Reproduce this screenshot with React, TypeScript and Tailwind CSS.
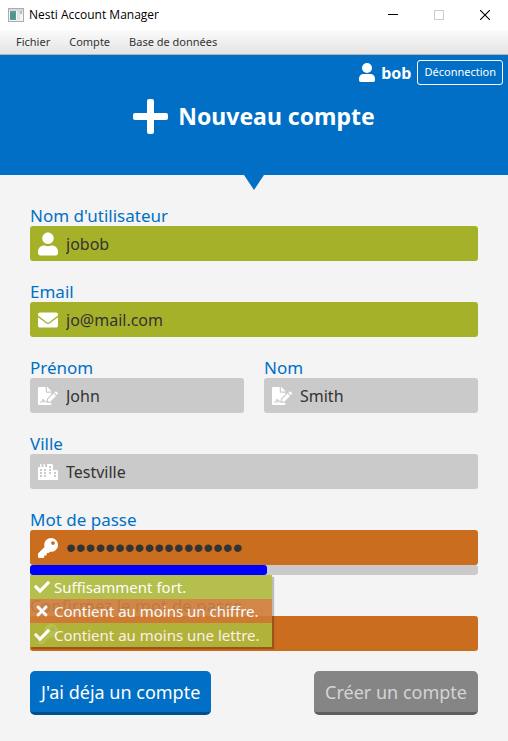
import { useId, useState, type ReactNode } from "react";
import type { IconType } from "react-icons";
import {
  FaCheck,
  FaCity,
  FaEnvelope,
  FaFileSignature,
  FaKey,
  FaTimes,
  FaUser,
} from "react-icons/fa";

type Tone = "valid" | "neutral" | "invalid";

const toneClass: Record<Tone, string> = {
  valid: "bg-[#a6b12a]",
  neutral: "bg-[#cacaca]",
  invalid: "bg-[#cb6d1e]",
};

interface FieldProps {
  label: string;
  icon: IconType;
  value: string;
  tone: Tone;
  type?: "text" | "password";
  children?: ReactNode;
}

function Field({ label, icon: Icon, value, tone, type = "text", children }: FieldProps) {
  const id = useId();
  const [text, setText] = useState(value);
  // Masked text is set larger so that its dots are easy to count.
  const font = type === "password" ? "font-['Liberation_Sans',sans-serif] text-[28px]" : "text-base";
  return (
    <div className="min-w-0 flex-1">
      <label htmlFor={id} className="block text-[17px] leading-5 text-[#0070c5]">
        {label}
      </label>
      <div className={`flex h-[35px] items-center gap-2 rounded-[3px] px-2 ${toneClass[tone]}`}>
        <Icon className="h-6 w-5 shrink-0 text-white" aria-hidden="true" />
        <input
          id={id}
          type={type}
          value={text}
          onChange={(e) => setText(e.target.value)}
          className={`h-full w-full min-w-0 bg-transparent text-[#333333] outline-none ${font}`}
        />
      </div>
      {children}
    </div>
  );
}

const rules = [
  { text: "Suffisamment fort.", ok: true },
  { text: "Contient au moins un chiffre.", ok: false },
  { text: "Contient au moins une lettre.", ok: true },
];

function PasswordRules() {
  return (
    <ul className="absolute top-full left-0 z-10 text-[15px] leading-6 whitespace-nowrap text-white opacity-90 shadow-[2px_2px_1px_rgba(0,0,0,0.25)]">
      {rules.map(({ text, ok }) => (
        <li
          key={text}
          className={`flex items-center gap-1 pr-3 pl-1 ${ok ? "bg-[#afba3c]" : "bg-[#cf7c36]"}`}
        >
          {ok ? <FaCheck className="size-4" /> : <FaTimes className="size-4" />}
          {text}
        </li>
      ))}
    </ul>
  );
}

function TitleBar() {
  return (
    <div className="flex h-[30px] items-center bg-white pl-2 text-black">
      <svg className="h-[14px] w-4" viewBox="0 0 16 14" aria-hidden="true">
        <rect x="0.5" y="0.5" width="15" height="13" fill="#f4f4f4" stroke="#a9adb2" />
        <rect x="1" y="1" width="14" height="2" fill="#d5d8dc" />
        <rect x="2" y="3" width="6" height="9" fill="#6591ab" />
        <rect x="2" y="5" width="5" height="6" fill="#4a9a7c" />
        <rect x="9" y="3" width="3" height="9" fill="#dfe3e6" />
        <rect x="12" y="3" width="2" height="3" fill="#9cc7a9" />
      </svg>
      <span className="ml-[5px] flex-1 font-['Open_Sans',sans-serif] text-xs">Nesti Account Manager</span>
      <button type="button" aria-label="Réduire" className="grid h-full w-[46px] place-items-center">
        <svg className="h-[10px] w-[10px]" viewBox="0 0 10 10" shapeRendering="crispEdges">
          <path d="M0 4.5h10" stroke="#000" />
        </svg>
      </button>
      <button type="button" disabled aria-label="Agrandir" className="grid h-full w-[46px] place-items-center">
        <svg className="h-[10px] w-[10px]" viewBox="0 0 10 10" shapeRendering="crispEdges">
          <rect x="0.5" y="0.5" width="9" height="9" fill="none" stroke="#ccc" />
        </svg>
      </button>
      <button type="button" aria-label="Fermer" className="grid h-full w-[46px] place-items-center">
        <svg className="h-[10px] w-[10px]" viewBox="0 0 10 10">
          <path d="M0 0l10 10M10 0L0 10" stroke="#000" strokeWidth="1.1" />
        </svg>
      </button>
    </div>
  );
}

export default function App() {
  return (
    <div className="flex min-h-screen flex-col bg-[#f4f4f4] font-['Noto_Sans',sans-serif]">
      <TitleBar />
      <nav className="flex h-[25px] items-center gap-[3px] border-b border-[#b5b5b5] bg-linear-to-b from-[#fbfbfb] to-[#e4e4e4] px-2 text-[11px] text-[#333333]">
        <button type="button" className="px-2">Fichier</button>
        <button type="button" className="px-2">Compte</button>
        <button type="button" className="px-2">Base de données</button>
      </nav>

      <header className="relative h-[120px] bg-[#006fc5] p-[5px] text-white">
        <div className="flex items-center justify-end gap-[6px]">
          <svg className="h-[19px] w-4" viewBox="0 0 16 19" fill="currentColor" aria-hidden="true">
            <circle cx="8" cy="5" r="5" />
            <path d="M4.5 11h7A4.5 4.5 0 0 1 16 15.500v1.700A1.800 1.800 0 0 1 14.200 19H1.800A1.800 1.800 0 0 1 0 17.200v-1.700A4.500 4.500 0 0 1 4.500 11z" />
          </svg>
          <span className="text-base leading-6 font-bold">bob</span>
          <button type="button" className="h-[25px] rounded-[3px] border border-white px-[6px] text-[11px]">
            Déconnection
          </button>
        </div>
        <h1 className="flex items-center justify-center gap-[10px] pt-2 text-[23px] leading-[46px] font-bold">
          <svg className="size-[35px]" viewBox="0 0 35 35" fill="currentColor" aria-hidden="true">
            <rect x="14" width="7" height="35" rx="2" />
            <rect y="14" width="35" height="7" rx="2" />
          </svg>
          Nouveau compte
        </h1>
        <svg className="absolute top-full left-1/2 h-[15px] w-5 -translate-x-1/2" viewBox="0 0 20 15" aria-hidden="true">
          <path d="M0 0h20L10 15z" fill="#006fc5" />
        </svg>
      </header>

      <form className="flex flex-col gap-5 px-[30px] pt-[31px] pb-[26px]" onSubmit={(e) => e.preventDefault()}>
        <div className="flex flex-col gap-[21px]">
          <Field label="Nom d'utilisateur" icon={FaUser} value="jobob" tone="valid" />
          <Field label="Email" icon={FaEnvelope} value="jo@mail.com" tone="valid" />
          <div className="flex gap-5">
            <Field label="Prénom" icon={FaFileSignature} value="John" tone="neutral" />
            <Field label="Nom" icon={FaFileSignature} value="Smith" tone="neutral" />
          </div>
          <Field label="Ville" icon={FaCity} value="Testville" tone="neutral" />
          <div className="relative">
            <Field label="Mot de passe" icon={FaKey} value="motdepassesecretab" tone="invalid" type="password">
              <div className="h-[10px] rounded-[3px] bg-[#cacaca]">
                <div className="h-full w-[53%] rounded-[3px] bg-[#0000ff]" />
              </div>
            </Field>
            <PasswordRules />
          </div>
          <Field label="Confirmez le mot de passe" icon={FaKey} value="" tone="invalid" type="password" />
        </div>
        <div className="flex justify-between text-lg">
          <button type="button" className="h-11 rounded-[5px] border-b-3 border-[#00508e] bg-[#006fc5] px-[11px] text-white">
            J'ai déja un compte
          </button>
          <button type="submit" disabled className="h-11 rounded-[5px] border-b-3 border-[#5f5f5f] bg-[#858585] px-[11px] text-[#d4d4d4]">
            Créer un compte
          </button>
        </div>
      </form>
    </div>
  );
}
